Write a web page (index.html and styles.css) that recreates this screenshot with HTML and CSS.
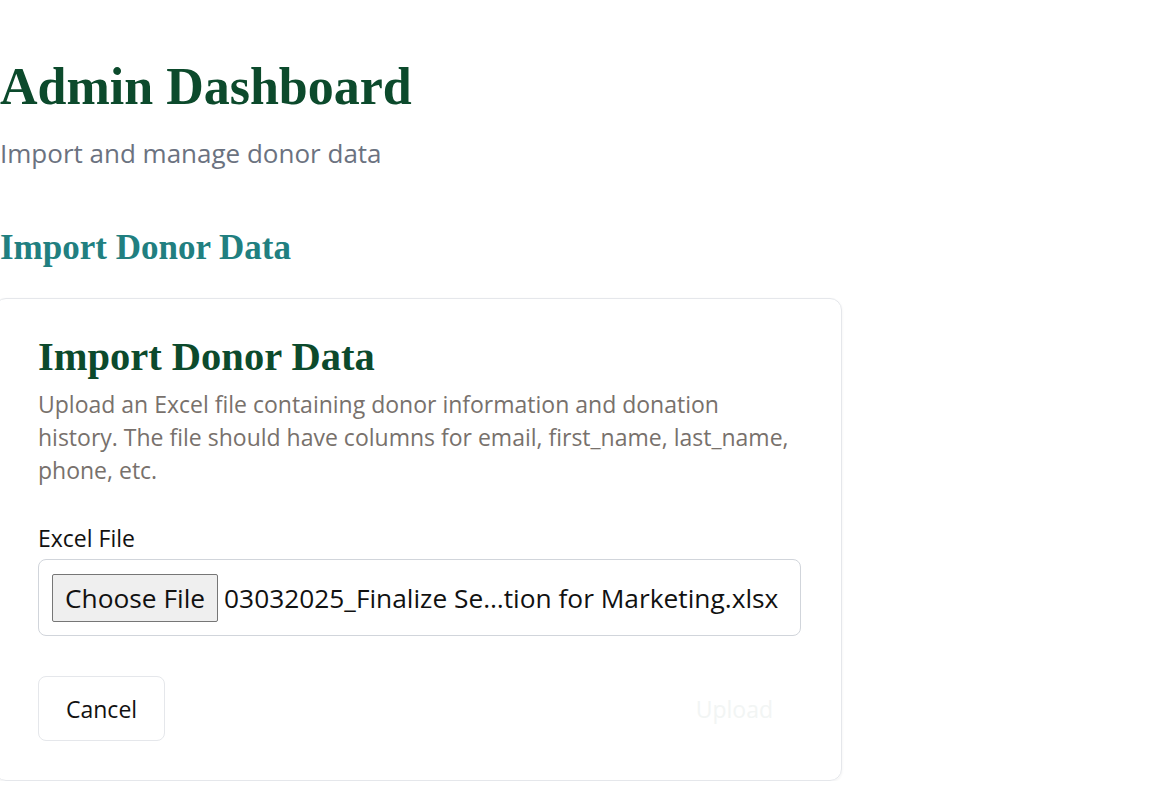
FILE: index.html
```html
<!DOCTYPE html>
<html lang="en">
<head>
<meta charset="utf-8">
<title>Admin Dashboard</title>
<link rel="stylesheet" href="styles.css">
</head>
<body>
<main class="page">
  <header class="page-header">
    <h1 class="page-title">Admin Dashboard</h1>
    <p class="page-subtitle">Import and manage donor data</p>
  </header>
  <section class="section">
    <h2 class="section-title">Import Donor Data</h2>
    <div class="card">
      <h3 class="card-title">Import Donor Data</h3>
      <p class="card-desc">Upload an Excel file containing donor information and donation history. The file should have columns for email, first_name, last_name, phone, etc.</p>
      <div class="field">
        <label class="field-label">Excel File</label>
        <div class="file-input">
          <span class="file-button">Choose File</span>
          <span class="file-name">03032025_Finalize Se…tion for Marketing.xlsx</span>
        </div>
      </div>
      <div class="actions">
        <button class="btn btn-cancel" type="button">Cancel</button>
        <button class="btn btn-upload" type="button" disabled>Upload</button>
      </div>
    </div>
  </section>
</main>
</body>
</html>
```

FILE: styles.css
```css
* { box-sizing: border-box; }
html, body { margin: 0; padding: 0; background: #ffffff; overflow: hidden; }
body { font-family: "Open Sans", "Noto Sans", sans-serif; color: #111; }
.page { padding-top: 56px; width: 842px; }
.page-title {
  margin: 0;
  font-family: "Liberation Serif", "Times New Roman", serif;
  font-weight: 700;
  font-size: 52px;
  line-height: 1.2;
  color: #0c4a2c;
}
.page-subtitle {
  margin: 17px 0 0;
  font-size: 26px;
  line-height: 36px;
  color: #6b7280;
}
.section { margin-top: 56px; }
.section-title {
  margin: 0;
  font-family: "Liberation Serif", "Times New Roman", serif;
  font-weight: 700;
  font-size: 35px;
  line-height: 41px;
  color: #217f80;
}
.card {
  margin-top: 30px;
  margin-left: -6px;
  border: 1px solid #e5e7eb;
  border-radius: 12px;
  padding: 34px 37px 39px 43px;
  box-shadow: 0 1px 3px rgba(0,0,0,0.06);
}
.card-title {
  margin: 0;
  font-family: "Liberation Serif", "Times New Roman", serif;
  font-weight: 700;
  font-size: 40.5px;
  line-height: 48px;
  color: #0c4a2c;
}
.card-desc {
  margin: 7px 0 0;
  max-width: 760px;
  font-size: 23px;
  line-height: 33px;
  color: #78716c;
}
.field { margin-top: 37px; }
.field-label {
  display: block;
  font-size: 23px;
  line-height: 28px;
  color: #111;
}
.file-input {
  margin-top: 7px;
  display: flex;
  align-items: center;
  gap: 6px;
  height: 77px;
  width: 763px;
  padding: 0 13px;
  border: 1px solid #d1d5db;
  border-radius: 8px;
  font-size: 26.3px;
  white-space: nowrap;
  overflow: hidden;
}
.file-button {
  display: inline-flex;
  align-items: center;
  height: 48px;
  padding: 0 12px;
  background: #efefef;
  border: 1px solid #767676;
  border-radius: 2px;
  color: #111;
}
.file-name { color: #111; }
.actions {
  margin-top: 40px;
  display: flex;
  justify-content: space-between;
  align-items: center;
  width: 763px;
}
.btn {
  font-family: "Open Sans", "Noto Sans", sans-serif;
  font-size: 23px;
  height: 65px;
  padding: 0 27px;
  border-radius: 8px;
  background: #ffffff;
}
.btn-cancel {
  border: 1px solid #e5e7eb;
  color: #111;
}
.btn-upload {
  border: 1px solid transparent;
  color: #f2f5f4;
}
```
